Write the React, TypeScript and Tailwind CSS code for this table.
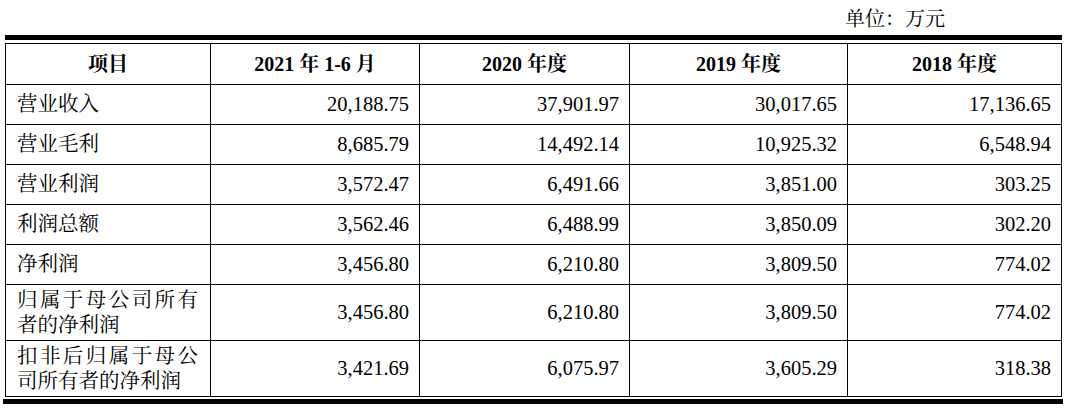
const headers = ['项目', '2021 年 1-6 月', '2020 年度', '2019 年度', '2018 年度'];

const rows: { name: string; values: string[]; tall?: boolean }[] = [
  { name: '营业收入', values: ['20,188.75', '37,901.97', '30,017.65', '17,136.65'] },
  { name: '营业毛利', values: ['8,685.79', '14,492.14', '10,925.32', '6,548.94'] },
  { name: '营业利润', values: ['3,572.47', '6,491.66', '3,851.00', '303.25'] },
  { name: '利润总额', values: ['3,562.46', '6,488.99', '3,850.09', '302.20'] },
  { name: '净利润', values: ['3,456.80', '6,210.80', '3,809.50', '774.02'] },
  { name: '归属于母公司所有者的净利润', values: ['3,456.80', '6,210.80', '3,809.50', '774.02'], tall: true },
  { name: '扣非后归属于母公司所有者的净利润', values: ['3,421.69', '6,075.97', '3,605.29', '318.38'], tall: true },
];

const widths = ['w-[205px]', 'w-[209px]', 'w-[210px]', 'w-[218px]', 'w-[214px]'];

export default function App() {
  return (
    <div className="w-[1071px] h-[409px] bg-white text-black font-['Liberation_Serif','Noto_Serif_CJK_SC','Noto_Sans_CJK_SC',serif] overflow-hidden">
      <div className="h-[35px] flex items-center justify-end pr-[126px] text-[20px] leading-none pt-[2px]">
        单位：万元
      </div>
      <div className="ml-[5px] w-[1057px] h-[5px] bg-black" />
      <table className="ml-[5px] mt-[3px] w-[1056px] table-fixed border-collapse text-[20.5px]">
        <colgroup>
          {widths.map((w, i) => (
            <col key={i} className={w} />
          ))}
        </colgroup>
        <thead>
          <tr className="h-[41px]">
            {headers.map((h) => (
              <th key={h} className="border border-black font-bold text-center text-[20px] align-middle">
                {h}
              </th>
            ))}
          </tr>
        </thead>
        <tbody>
          {rows.map((r) => (
            <tr key={r.name} className={r.tall ? 'h-[56px]' : 'h-[40px]'}>
              <td className="border border-black pl-[11px] pr-[12px] text-[20.5px] leading-[25px] text-justify align-middle font-normal">
                {r.name}
              </td>
              {r.values.map((v, i) => (
                <td key={i} className="border border-black text-right pr-[10px] align-middle">
                  {v}
                </td>
              ))}
            </tr>
          ))}
        </tbody>
      </table>
      <div className="ml-[3px] mt-[2px] w-[1060px] h-[5px] bg-black" />
    </div>
  );
}
